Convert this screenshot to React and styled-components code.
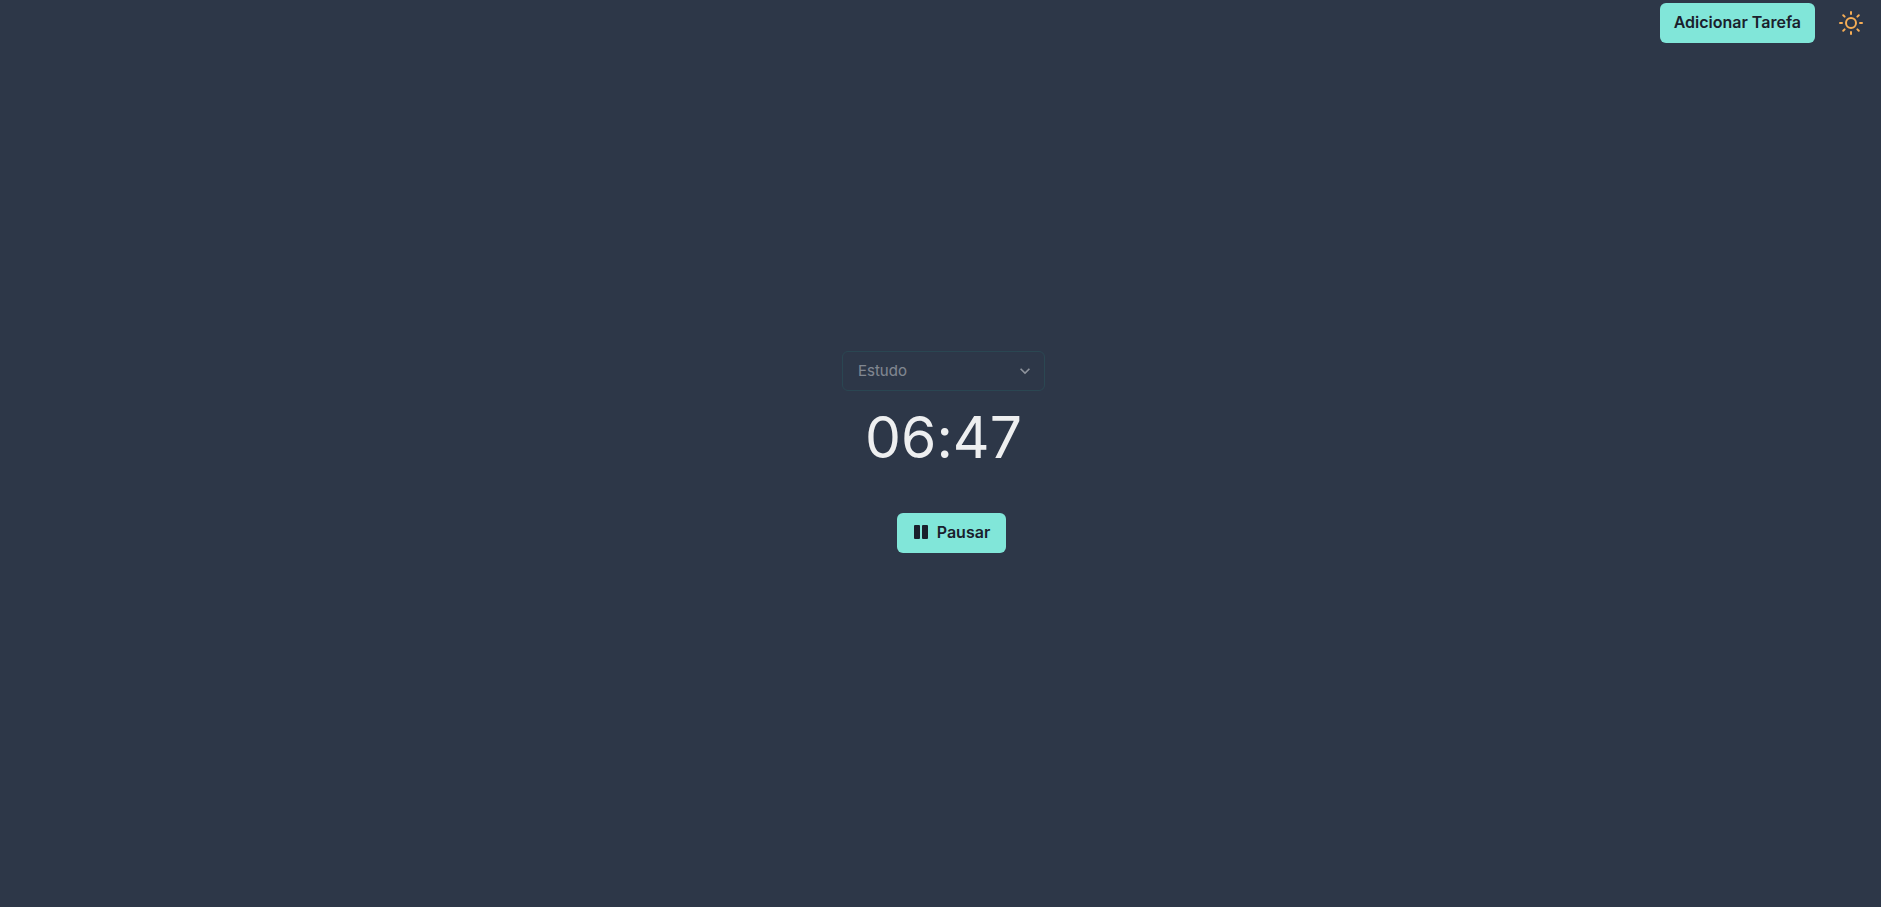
import React from "react";
import styled, { createGlobalStyle } from "styled-components";
import { FiSun } from "react-icons/fi";

const GlobalStyle = createGlobalStyle`
  *, *::before, *::after {
    box-sizing: border-box;
  }
  body {
    margin: 0;
    background: #2d3748;
    color: rgba(255, 255, 255, 0.92);
    font-family: Inter, "Liberation Sans", sans-serif;
    font-size: 16px;
    line-height: 24px;
  }
`;

const Page = styled.div`
  display: grid;
  grid-template-rows: 1fr auto 1fr;
  min-height: 100vh;
`;

const Header = styled.header`
  display: flex;
  align-items: center;
  align-self: start;
  justify-content: flex-end;
  gap: 16px;
  padding: 3px 10px;
`;

const Button = styled.button`
  display: inline-flex;
  align-items: center;
  justify-content: center;
  gap: 8px;
  height: 40px;
  padding: 0 ${({ $withIcon }) => ($withIcon ? "16px" : "14px")} 2px;
  border: 0;
  border-radius: 6px;
  background: #81e6d9;
  color: #1a202c;
  font: inherit;
  font-weight: 600;
  cursor: pointer;
`;

const IconButton = styled.button`
  display: inline-flex;
  align-items: center;
  justify-content: center;
  width: 40px;
  height: 40px;
  padding: 0;
  border: 0;
  border-radius: 6px;
  background: transparent;
  color: #f6ad55;
  cursor: pointer;
`;

const Timer = styled.main`
  display: flex;
  flex-direction: column;
  align-items: center;
  padding: 0 0 3px 6px;
`;

const SelectField = styled.div`
  display: grid;
  grid-template-columns: 203px;
  align-items: center;

  & > * {
    grid-area: 1 / 1;
  }
`;

const Select = styled.select`
  appearance: none;
  width: 100%;
  height: 40px;
  padding: 0 32px 0 15px;
  border: 1px solid #285e61;
  border-radius: 6px;
  background: transparent;
  color: #fff;
  font: inherit;
  font-size: 15px;
  opacity: 0.4;
`;

const Chevron = styled.svg`
  justify-self: end;
  width: 20px;
  height: 20px;
  margin-right: 10px;
  fill: currentColor;
  opacity: 0.5;
  pointer-events: none;
`;

const Time = styled.time`
  font-size: 57px;
  line-height: 94px;
  font-feature-settings: "calt" 0;
`;

const Actions = styled.div`
  display: flex;
  margin-top: 28px;
  padding-left: 16px;
`;

const PauseIcon = () => (
  <svg width="16" height="16" viewBox="0 0 16 16" fill="currentColor" aria-hidden="true">
    <rect x="1" y="1" width="6" height="14" rx="1" />
    <rect x="9" y="1" width="6" height="14" rx="1" />
  </svg>
);

export default function App() {
  return (
    <>
      <GlobalStyle />
      <Page>
        <Header>
          <Button type="button">Adicionar Tarefa</Button>
          <IconButton type="button" aria-label="Alternar tema">
            <FiSun size={24} />
          </IconButton>
        </Header>
        <Timer>
          <SelectField>
            <Select aria-label="Tarefa" defaultValue="estudo" disabled>
              <option value="estudo">Estudo</option>
            </Select>
            <Chevron viewBox="0 0 24 24" aria-hidden="true">
              <path d="M16.59 8.59L12 13.17 7.41 8.59 6 10l6 6 6-6z" />
            </Chevron>
          </SelectField>
          <Time>06:47</Time>
          <Actions>
            <Button type="button" $withIcon>
              <PauseIcon />
              Pausar
            </Button>
          </Actions>
        </Timer>
      </Page>
    </>
  );
}
